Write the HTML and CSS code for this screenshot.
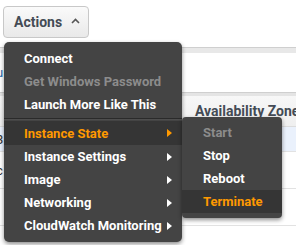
FILE: index.html
```html
<!DOCTYPE html>
<html lang="en">
<head>
  <meta charset="UTF-8">
  <title>Instance Actions</title>
  <link rel="stylesheet" href="styles.css">
</head>
<body>
  <div class="page">
    <!-- Toolbar with the open Actions menu -->
    <div class="toolbar">
      <button class="actions-btn">Actions
        <svg class="caret" width="9" height="6" viewBox="0 0 9 6"><polyline points="1,5 4.5,1.5 8,5" fill="none" stroke="#555" stroke-width="1.6"/></svg>
      </button>

      <ul class="menu">
        <li class="item">Connect</li>
        <li class="item disabled">Get Windows Password</li>
        <li class="item">Launch More Like This</li>
        <li class="divider"></li>
        <li class="item sub active">Instance State <span class="arrow"></span>
          <ul class="submenu">
            <li class="item disabled">Start</li>
            <li class="item">Stop</li>
            <li class="item">Reboot</li>
            <li class="item active">Terminate</li>
          </ul>
        </li>
        <li class="item sub">Instance Settings <span class="arrow"></span></li>
        <li class="item sub">Image <span class="arrow"></span></li>
        <li class="item sub">Networking <span class="arrow"></span></li>
        <li class="item sub">CloudWatch Monitoring <span class="arrow"></span></li>
      </ul>
    </div>

    <!-- Table behind the menu -->
    <div class="band"></div>
    <div class="filter-row"><span class="frag link">u</span></div>
    <div class="band thin"></div>
    <div class="head-row"><span class="col-head">Availability Zone</span></div>
    <div class="row selected"><span class="frag">3</span></div>
    <div class="row"><span class="frag">c</span></div>
    <div class="row"></div>
  </div>
</body>
</html>
```

FILE: styles.css
```css
body {
  margin: 0;
  font-family: Roboto, "Liberation Sans", Arial, sans-serif;
  background-color: #fff;
}

.page {
  width: 296px;
  height: 245px;
  overflow: hidden;
}

/* Toolbar */
.toolbar {
  position: relative;
  height: 41px;
  padding: 6px 0 0 3px;
}

.actions-btn {
  display: flex;
  align-items: center;
  gap: 9px;
  margin: 0;
  width: 86px;
  height: 32px;
  padding: 0 0 0 10px;
  font-family: inherit;
  font-size: 14px;
  font-weight: 700;
  color: #444b55;
  background: linear-gradient(#fafafa, #e9e9e9);
  border: 1px solid #c8c8c8;
  border-radius: 4px;
}

.caret {
  margin-top: -2px;
}

/* Dropdown menu */
.menu,
.submenu {
  list-style: none;
  margin: 0;
  background-color: #444;
  box-shadow: 0 2px 4px rgba(0, 0, 0, 0.45);
  z-index: 10;
}

.menu {
  position: absolute;
  left: 4px;
  top: 42px;
  width: 178px;
  padding: 5px 0;
  border-radius: 5px;
}

.item {
  position: relative;
  display: flex;
  align-items: center;
  justify-content: space-between;
  height: 23px;
  padding: 0 10px 0 20px;
  font-size: 13px;
  font-weight: 700;
  color: #fff;
  white-space: nowrap;
}

.item.disabled {
  color: #8c8c8c;
}

.item.active {
  background-color: #353535;
  color: #ff9900;
}

.menu > .item.active {
  height: 24px;
}

.arrow {
  width: 0;
  height: 0;
  border-left: 5px solid #fff;
  border-top: 4px solid transparent;
  border-bottom: 4px solid transparent;
}

.item.active .arrow {
  border-left-color: #ff9900;
}

.divider {
  margin: 2px 0 1px;
  border-top: 1px solid #2a2a2a;
  border-bottom: 1px solid #4e4e4e;
}

.submenu {
  position: absolute;
  left: 100%;
  top: -4px;
  width: 100px;
  padding: 4px 0 5px;
  border-radius: 4px;
}

.submenu .item {
  padding-left: 21px;
}

/* Table behind */
.band {
  height: 5px;
  border-top: 1px solid #cfcfcf;
  background-color: #e8e8e8;
}

.band.thin {
  height: 3px;
  background-color: #e4e4e4;
}

.filter-row {
  display: flex;
  align-items: center;
  height: 39px;
}

.head-row {
  display: flex;
  align-items: center;
  height: 30px;
  padding-left: 195px;
  background: linear-gradient(#f7f7f7, #efefef);
  border-bottom: 1px solid #dcdcdc;
}

.col-head {
  font-size: 14px;
  font-weight: 700;
  color: #444b55;
  white-space: nowrap;
}

.row {
  display: flex;
  align-items: center;
  height: 36px;
  border-bottom: 1px solid #e2e2e2;
}

.row.selected {
  height: 24px;
  background-color: #eaf1fc;
}

.frag {
  margin-left: -4px;
  font-size: 13px;
  color: #333;
}

.frag.link {
  color: #2c6cb0;
}
```
